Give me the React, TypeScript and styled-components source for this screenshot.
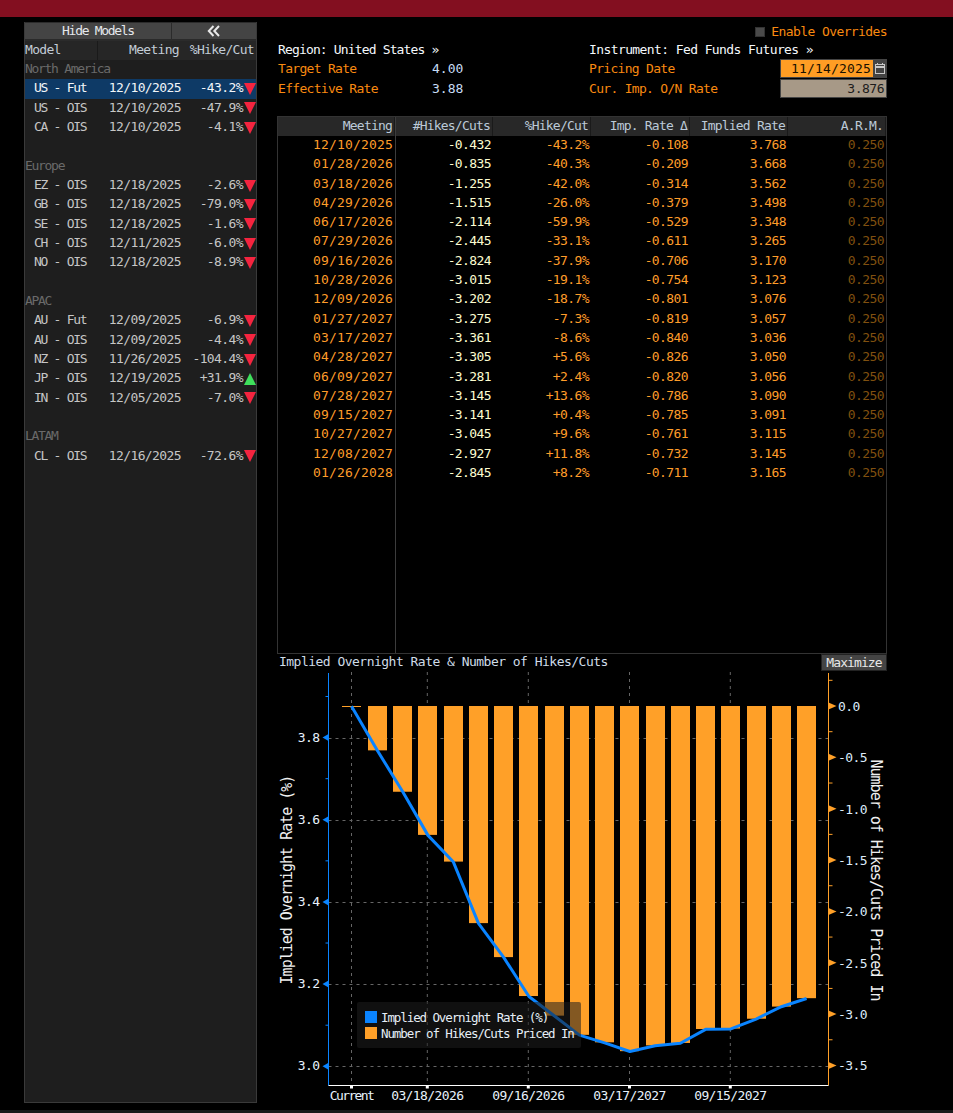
import React from "react";
import styled, { createGlobalStyle } from "styled-components";

const Global = createGlobalStyle`
  html, body { margin: 0; padding: 0; background: #000; }
  body { font-family: "DejaVu Sans Mono", "Liberation Mono", monospace; font-size: 13px; letter-spacing: -.6px; }
`;

const Page = styled.div`
  width: 953px; height: 1113px; display: flex; flex-direction: column; overflow: hidden; background: #000;
`;
const TopBar = styled.div`height: 17px; flex: none; background: #830f20;`;
const Body = styled.div`
  flex: none; height: 1093px; display: flex; align-items: flex-start; padding: 5px 0 0 24px; gap: 20px; box-sizing: border-box;
`;
const BottomStrip = styled.div`height: 3px; flex: none; background: #1a1a1a;`;

const Side = styled.aside`
  width: 233px; height: 1081px; flex: none; background: #1e1e1e; display: flex; flex-direction: column;
  box-sizing: border-box; border: 1px solid #3a3a3a; border-top: none;
`;
const SideButtons = styled.div`display: grid; grid-template-columns: 146px 1fr; gap: 1px; height: 19px; padding: 1px 0; box-sizing: border-box; background: #2b2b2b;`;
const SideButton = styled.div`
  background: #444; color: #e4e8ec; display: flex; align-items: center; justify-content: center; letter-spacing: -1.3px; line-height: 14px;
  border-bottom: 1px solid #2a2a2a;
`;
const SideHead = styled.div`
  display: grid; grid-template-columns: 73px 83px 1fr; height: 19px; background: #262626; color: #c2ccd6; letter-spacing: -.7px;
`;
const HeadCell = styled.div<{ $left?: boolean }>`
  text-align: ${p => (p.$left ? "left" : "right")}; padding: 0 ${p => (p.$left ? 0 : 2)}px 0 0;
  border-right: ${p => (p.$left ? "1px solid #1a1a1a" : "none")}; line-height: 17px; white-space: nowrap;
`;
const Section = styled.div`height: 19.33px; line-height: 17.33px; color: #6a6a6a; letter-spacing: -1.3px;`;
const Blank = styled.div`height: 19.33px;`;
const ModelRow = styled.div<{ $on?: boolean }>`
  height: 19.33px; display: grid; grid-template-columns: 73px 83px 62px 1fr; line-height: 17.33px;
  color: ${p => (p.$on ? "#f2f6fa" : "#c6c6c6")}; background: ${p => (p.$on ? "#0e3a66" : "transparent")};
`;
const ModelName = styled.span`padding-left: 9px; white-space: nowrap; letter-spacing: -1.3px;`;
const ModelDate = styled.span`text-align: right;`;
const ModelPct = styled.span`text-align: right; white-space: nowrap;`;
const Arrow = styled.span<{ $up?: boolean }>`
  justify-self: end; align-self: center; width: 0; height: 0; border-left: 6.5px solid transparent; border-right: 6.5px solid transparent;
  ${p => (p.$up ? "border-bottom: 12px solid #3fe05c;" : "border-top: 12px solid #f5243f;")}
`;

const Main = styled.main`width: 610px; flex: none; display: flex; flex-direction: column;`;
const Overrides = styled.div`height: 17px; display: flex; justify-content: flex-end; align-items: center; gap: 6px; color: #f98a10; padding-top: 1px;`;
const Check = styled.span`width: 10px; height: 10px; background: #4a4a4a; border: 1px solid #333; box-sizing: border-box;`;
const Info = styled.div`display: grid; grid-template-columns: 311px 1fr; height: 55px; padding-top: 1px; margin-bottom: 20px;`;
const InfoCol = styled.div`display: flex; flex-direction: column; padding-left: 1px;`;
const InfoTitle = styled.div<{ $tight?: boolean }>`height: 18px; line-height: 18px; color: #f4f8fc; letter-spacing: ${p => (p.$tight ? "-.85px" : "-.6px")};`;
const InfoRow = styled.div`height: 19.5px; line-height: 19.5px; display: flex; align-items: center; color: #f98a10; letter-spacing: -.7px;`;
const InfoLabel = styled.span`width: 154px; flex: none;`;
const InfoValue = styled.span`color: #c7dcf5; letter-spacing: 0;`;
const InfoLabelWide = styled.span`width: 191px; flex: none;`;
const DateBox = styled.div`
  width: 93px; height: 19px; background: #ff9d24; color: #1a1100; text-align: right; line-height: 17px; padding-right: 2px;
  box-sizing: border-box; letter-spacing: .17px; border: 1px solid #444; border-right: none;
`;
const CalBtn = styled.div`width: 14px; height: 19px; background: #444; display: flex; align-items: center; justify-content: center;`;
const ReadBox = styled.div`
  width: 107px; height: 19px; background: #a79987; color: #1c1c1c; text-align: right; line-height: 17px; padding-right: 2px; box-sizing: border-box;
  border: 1px solid #444; letter-spacing: -.5px;
`;

const TableBox = styled.div`height: 538px; border: 1px solid #333; box-sizing: border-box; display: flex; flex-direction: column; position: relative;`;
const Divider = styled.div`position: absolute; left: 117px; top: 0; bottom: 0; width: 1px; background: #3c3c3c;`;
const Cols = "117px 98px 98px 99px 98px 1fr";
const TableHead = styled.div`display: grid; grid-template-columns: ${Cols}; height: 19px; background: #282828; color: #bccad8;`;
const Th = styled.div`text-align: right; padding-right: 2px; line-height: 18px; border-right: 1px solid #1a1a1a; letter-spacing: -.8px; white-space: nowrap;`;
const Tr = styled.div`display: grid; grid-template-columns: ${Cols}; height: 19.3px; line-height: 17.3px;`;
const Td = styled.div<{ $c: string; $wide?: boolean }>`
  text-align: right; padding-right: 2px; color: ${p => p.$c}; ${p => (p.$wide ? "letter-spacing: .17px;" : "")}
`;

const ChartHead = styled.div`height: 18px; display: flex; justify-content: space-between; align-items: flex-start; color: #cfdce8; padding-left: 2px; letter-spacing: -.52px; line-height: 15px;`;
const MaxBtn = styled.div`width: 66px; height: 17px; background: #444; color: #e8e8e8; text-align: center; line-height: 15px; letter-spacing: -.9px; border: 1px solid #222; box-sizing: border-box;`;
const ChartWrap = styled.div`position: relative; height: 430px;`;
const ChartSvg = styled.svg`display: block; font-family: "DejaVu Sans Mono", monospace; font-size: 13px;`;
const Legend = styled.div`
  position: absolute; left: 80px; top: 330px; width: 224px; height: 46px; background: rgba(30,30,30,.55); border-radius: 2px;
  display: flex; flex-direction: column; justify-content: center; gap: 4px; padding-left: 8px; box-sizing: border-box; color: #e6eef6;
`;
const LegendRow = styled.div`display: flex; align-items: center; gap: 4px; height: 12px; white-space: nowrap; font-size: 12.5px; letter-spacing: -1.1px;`;
const Swatch = styled.span<{ $c: string }>`width: 12px; height: 12px; background: ${p => p.$c}; flex: none;`;

type M = { n: string; d: string; p: string; up?: boolean; on?: boolean };
const groups: { t: string; rows: M[] }[] = [
  { t: "North America", rows: [
    { n: "US - Fut", d: "12/10/2025", p: "-43.2%", on: true },
    { n: "US - OIS", d: "12/10/2025", p: "-47.9%" },
    { n: "CA - OIS", d: "12/10/2025", p: "-4.1%" } ] },
  { t: "Europe", rows: [
    { n: "EZ - OIS", d: "12/18/2025", p: "-2.6%" },
    { n: "GB - OIS", d: "12/18/2025", p: "-79.0%" },
    { n: "SE - OIS", d: "12/18/2025", p: "-1.6%" },
    { n: "CH - OIS", d: "12/11/2025", p: "-6.0%" },
    { n: "NO - OIS", d: "12/18/2025", p: "-8.9%" } ] },
  { t: "APAC", rows: [
    { n: "AU - Fut", d: "12/09/2025", p: "-6.9%" },
    { n: "AU - OIS", d: "12/09/2025", p: "-4.4%" },
    { n: "NZ - OIS", d: "11/26/2025", p: "-104.4%" },
    { n: "JP - OIS", d: "12/19/2025", p: "+31.9%", up: true },
    { n: "IN - OIS", d: "12/05/2025", p: "-7.0%" } ] },
  { t: "LATAM", rows: [{ n: "CL - OIS", d: "12/16/2025", p: "-72.6%" }] },
];

const data: [string, string, string, string, string][] = [
  ["12/10/2025", "-0.432", "-43.2%", "-0.108", "3.768"],
  ["01/28/2026", "-0.835", "-40.3%", "-0.209", "3.668"],
  ["03/18/2026", "-1.255", "-42.0%", "-0.314", "3.562"],
  ["04/29/2026", "-1.515", "-26.0%", "-0.379", "3.498"],
  ["06/17/2026", "-2.114", "-59.9%", "-0.529", "3.348"],
  ["07/29/2026", "-2.445", "-33.1%", "-0.611", "3.265"],
  ["09/16/2026", "-2.824", "-37.9%", "-0.706", "3.170"],
  ["10/28/2026", "-3.015", "-19.1%", "-0.754", "3.123"],
  ["12/09/2026", "-3.202", "-18.7%", "-0.801", "3.076"],
  ["01/27/2027", "-3.275", "-7.3%", "-0.819", "3.057"],
  ["03/17/2027", "-3.361", "-8.6%", "-0.840", "3.036"],
  ["04/28/2027", "-3.305", "+5.6%", "-0.826", "3.050"],
  ["06/09/2027", "-3.281", "+2.4%", "-0.820", "3.056"],
  ["07/28/2027", "-3.145", "+13.6%", "-0.786", "3.090"],
  ["09/15/2027", "-3.141", "+0.4%", "-0.785", "3.091"],
  ["10/27/2027", "-3.045", "+9.6%", "-0.761", "3.115"],
  ["12/08/2027", "-2.927", "+11.8%", "-0.732", "3.145"],
  ["01/26/2028", "-2.845", "+8.2%", "-0.711", "3.165"],
];

const OX = 277, OY = 672;
const yL = (r: number) => 1066.3 - (r - 3) * 410.9 - OY;
const yR = (h: number) => 706 + 102.7 * h - OY;
const barX = (i: number) => 368 + 25.24 * i - OX;
const ORANGE = "#ffa028";
const BLUE = "#0a84ff";

function Chart() {
  const axisL = 51.5, axisR = 551.5, base = 413.5;
  const pts = [`${351.5 - OX},${yL(3.876)}`].concat(data.map((d, i) => `${barX(i) + 9.5},${yL(parseFloat(d[4]))}`)).join(" ");
  const vLines = [{ x: 351.5, t: "Current" }, { x: 427.3, t: "03/18/2026" }, { x: 528.3, t: "09/16/2026" }, { x: 629.5, t: "03/17/2027" }, { x: 730.3, t: "09/15/2027" }];
  return (
    <ChartSvg width={610} height={430} viewBox="0 0 610 430">
      {[3.8, 3.6, 3.4, 3.2, 3.0].map(v => (
        <line key={v} x1={axisL} x2={axisR} y1={Math.round(yL(v)) + .5} y2={Math.round(yL(v)) + .5} stroke="#666" strokeDasharray="3 4" />
      ))}
      {vLines.map(v => (
        <line key={v.t} x1={v.x - OX} x2={v.x - OX} y1={0} y2={base} stroke="#666" strokeDasharray="3 4" />
      ))}
      <rect x={342 - OX} y={yR(0)} width={19} height={1} fill={ORANGE} />
      {data.map((d, i) => (
        <rect key={i} x={Math.round(barX(i))} y={yR(0)} width={19} height={102.7 * -parseFloat(d[1])} fill={ORANGE} />
      ))}
      <polyline points={pts} fill="none" stroke={BLUE} strokeWidth={3} strokeLinejoin="round" />

      <line x1={axisL} x2={axisL} y1={1} y2={base} stroke={BLUE} />
      {[3.8, 3.6, 3.4, 3.2, 3.0].map(v => (
        <g key={v}>
          <polygon points={`${axisL},${yL(v) - 3.5} ${axisL},${yL(v) + 3.5} ${axisL - 6},${yL(v)}`} fill={BLUE} />
          <text x={42.5} y={yL(v) + 4} textAnchor="end" fill="#e8f2fc">{v.toFixed(1)}</text>
        </g>
      ))}
      {[3.9, 3.7, 3.5, 3.3, 3.1].map(v => (
        <line key={v} x1={axisL - 3} x2={axisL} y1={yL(v)} y2={yL(v)} stroke={BLUE} />
      ))}

      <line x1={axisR} x2={axisR} y1={1} y2={base} stroke={ORANGE} />
      {[0, 0.5, 1, 1.5, 2, 2.5, 3, 3.5].map(h => (
        <g key={h}>
          <polygon points={`${axisR},${yR(h) - 3.5} ${axisR},${yR(h) + 3.5} ${axisR + 8},${yR(h)}`} fill={ORANGE} />
          <text x={561} y={yR(h) + 5} fill="#dcebfa">{h === 0 ? "0.0" : `-${h.toFixed(1)}`}</text>
        </g>
      ))}
      {[-0.25, 0.25, 0.75, 1.25, 1.75, 2.25, 2.75, 3.25].map(h => (
        <line key={h} x1={axisR} x2={axisR + 4} y1={yR(h)} y2={yR(h)} stroke={ORANGE} />
      ))}

      <line x1={axisL} x2={axisR} y1={base} y2={base} stroke="#fff" />
      {vLines.map(v => (
        <g key={v.t}>
          <rect x={v.x - OX - 1.5} y={base} width={3} height={3} fill="#fff" />
          <text x={v.x - OX} y={base + 14} textAnchor="middle" fill="#e8f2fc" letterSpacing={v.t === "Current" ? -1.6 : undefined}>{v.t}</text>
        </g>
      ))}
      <text transform="translate(15 208) rotate(-90)" textAnchor="middle" fontSize={15} letterSpacing={-1} fill="#f0f0f0">Implied Overnight Rate (%)</text>
      <text transform="translate(594 208) rotate(90)" textAnchor="middle" fontSize={15} letterSpacing={-1} fill="#f0f0f0">Number of Hikes/Cuts Priced In</text>
    </ChartSvg>
  );
}

export default function App() {
  return (
    <Page>
      <Global />
      <TopBar />
      <Body>
        <Side>
          <SideButtons>
            <SideButton>Hide Models</SideButton>
            <SideButton>
              <svg width="14" height="12" viewBox="0 0 14 12" fill="none" stroke="#e8e8e8" strokeWidth="2">
                <path d="M6.5 1 1.8 6l4.7 5M12 1 7.3 6l4.7 5" />
              </svg>
            </SideButton>
          </SideButtons>
          <SideHead>
            <HeadCell $left>Model</HeadCell>
            <HeadCell>Meeting</HeadCell>
            <HeadCell>%Hike/Cut</HeadCell>
          </SideHead>
          {groups.map((g, gi) => (
            <React.Fragment key={g.t}>
              {gi > 0 && <Blank />}
              <Section>{g.t}</Section>
              {g.rows.map(r => (
                <ModelRow key={r.n + r.d} $on={r.on}>
                  <ModelName>{r.n}</ModelName>
                  <ModelDate>{r.d}</ModelDate>
                  <ModelPct>{r.p}</ModelPct>
                  <Arrow $up={r.up} />
                </ModelRow>
              ))}
            </React.Fragment>
          ))}
        </Side>
        <Main>
          <Overrides><Check />Enable Overrides</Overrides>
          <Info>
            <InfoCol>
              <InfoTitle $tight>Region: United States »</InfoTitle>
              <InfoRow><InfoLabel>Target Rate</InfoLabel><InfoValue>4.00</InfoValue></InfoRow>
              <InfoRow><InfoLabel>Effective Rate</InfoLabel><InfoValue>3.88</InfoValue></InfoRow>
            </InfoCol>
            <InfoCol>
              <InfoTitle>Instrument: Fed Funds Futures »</InfoTitle>
              <InfoRow>
                <InfoLabelWide>Pricing Date</InfoLabelWide>
                <DateBox>11/14/2025</DateBox>
                <CalBtn>
                  <svg width="10" height="11" viewBox="0 0 10 11" fill="none" stroke="#c8c8c8">
                    <rect x=".5" y="1.5" width="9" height="9" /><path d="M.5 4h9" strokeWidth="2" /><path d="M2.5 0v2M7.5 0v2" />
                  </svg>
                </CalBtn>
              </InfoRow>
              <InfoRow>
                <InfoLabelWide>Cur. Imp. O/N Rate</InfoLabelWide>
                <ReadBox>3.876</ReadBox>
              </InfoRow>
            </InfoCol>
          </Info>
          <TableBox>
            <Divider />
            <TableHead>
              <Th>Meeting</Th><Th>#Hikes/Cuts</Th><Th>%Hike/Cut</Th><Th>Imp. Rate Δ</Th><Th>Implied Rate</Th><Th>A.R.M.</Th>
            </TableHead>
            {data.map(d => (
              <Tr key={d[0]}>
                <Td $c="#ff9d2a" $wide>{d[0]}</Td>
                <Td $c="#fdfdd0">{d[1]}</Td>
                <Td $c="#ff9d2a">{d[2]}</Td>
                <Td $c="#ff9d2a">{d[3]}</Td>
                <Td $c="#ff9d2a">{d[4]}</Td>
                <Td $c="#80500f">0.250</Td>
              </Tr>
            ))}
          </TableBox>
          <ChartHead>
            <span>Implied Overnight Rate &amp; Number of Hikes/Cuts</span>
            <MaxBtn>Maximize</MaxBtn>
          </ChartHead>
          <ChartWrap>
            <Chart />
            <Legend>
              <LegendRow><Swatch $c={BLUE} />Implied Overnight Rate (%)</LegendRow>
              <LegendRow><Swatch $c={ORANGE} />Number of Hikes/Cuts Priced In</LegendRow>
            </Legend>
          </ChartWrap>
        </Main>
      </Body>
      <BottomStrip />
    </Page>
  );
}
